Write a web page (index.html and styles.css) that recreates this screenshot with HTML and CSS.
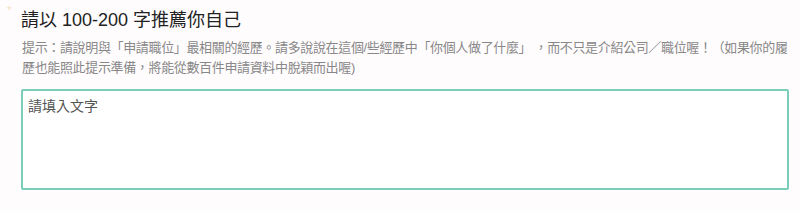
FILE: index.html
```html
<!DOCTYPE html>
<html lang="zh-Hant">
<head>
<meta charset="utf-8">
<link rel="stylesheet" href="styles.css">
</head>
<body>
<div class="field">
  <span class="req">*</span>
  <h2 class="title">請以 100-200 字推薦你自己</h2>
  <p class="hint">提示：請說明與「申請職位」最相關的經歷。請多說說在這個/些經歷中「你個人做了什麼」 ，而不只是介紹公司／職位喔！（如果你的履歷也能照此提示準備，將能從數百件申請資料中脫穎而出喔)</p>
  <textarea class="input" placeholder="請填入文字"></textarea>
</div>
</body>
</html>
```
FILE: styles.css
```css
html, body {
  margin: 0;
  padding: 0;
  background: #fffcfe;
}
body {
  font-family: "Liberation Sans", "Noto Sans CJK TC", sans-serif;
}
.field {
  position: relative;
  padding: 7px 11px 0 21px;
}
.req {
  position: absolute;
  left: 7px;
  top: 4px;
  font-size: 11px;
  color: #efe3b8;
}
.title {
  margin: 0;
  font-size: 18px;
  font-weight: normal;
  line-height: 26px;
  color: #222;
}
.hint {
  margin: 5px 0 0 1px;
  font-size: 13px;
  letter-spacing: -0.35px;
  line-height: 20px;
  color: #888;
}
.input {
  display: block;
  box-sizing: border-box;
  width: 768px;
  height: 101px;
  margin-top: 11px;
  padding: 4px 5px;
  border: 2px solid #79cdb9;
  border-radius: 2px;
  background: #fff;
  font-family: inherit;
  font-size: 14px;
  resize: none;
}
.input::placeholder {
  color: #555;
}
```
